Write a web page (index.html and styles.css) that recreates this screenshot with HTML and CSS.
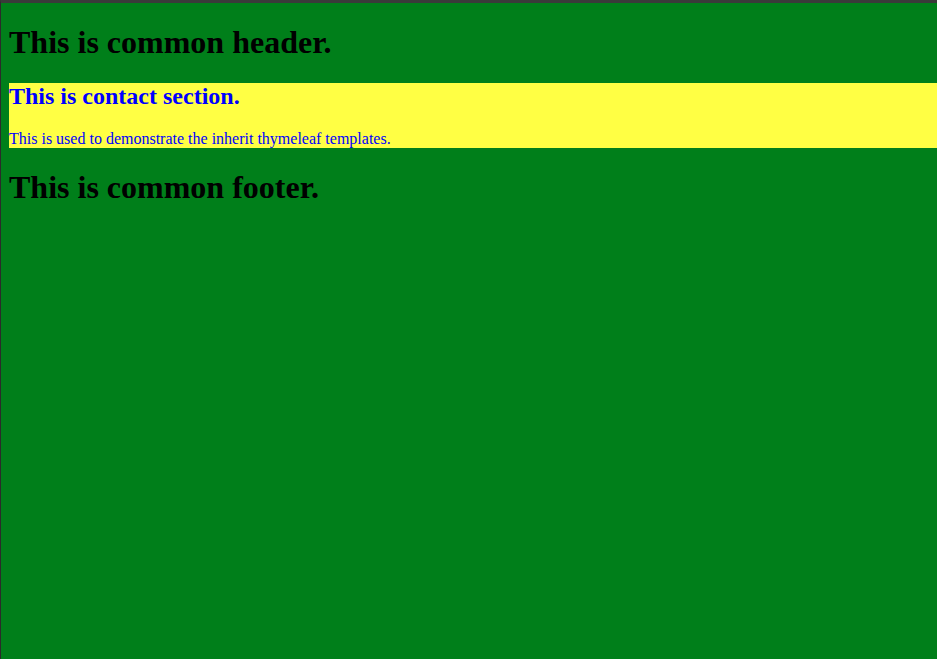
FILE: index.html
```html
<!DOCTYPE html>
<html>
<head>
<meta charset="utf-8">
<title>Contact</title>
<link rel="stylesheet" href="styles.css">
</head>
<body>
<div class="frame">
  <div class="page">
    <header class="site-header"><h1>This is common header.</h1></header>
    <section class="contact">
      <h2>This is contact section.</h2>
      <p>This is used to demonstrate the inherit thymeleaf templates.</p>
    </section>
    <footer class="site-footer"><h1>This is common footer.</h1></footer>
  </div>
</div>
</body>
</html>
```
FILE: styles.css
```css
html, body {
  margin: 0;
  height: 100%;
}
body {
  font-family: "Liberation Serif", "Times New Roman", serif;
  background: #333333;
}
.frame {
  height: 100%;
  box-sizing: border-box;
  border-top: 3px solid #3a3a3a;
  border-left: 1px solid #2b2b2b;
  background: #007f1a;
  overflow: hidden;
}
.page {
  padding: 0 0 0 8px;
  display: flow-root;
}
.site-header h1,
.site-footer h1 {
  font-size: 32px;
  margin: 21.44px 0;
  color: #000;
}
.site-footer h1 {
  margin-top: 20.5px;
}
.contact {
  background: #ffff44;
  color: #0000ff;
}
.contact h2 {
  font-size: 24px;
  margin: 0 0 20.5px;
}
.contact p {
  font-size: 16px;
  margin: 0;
}
```
